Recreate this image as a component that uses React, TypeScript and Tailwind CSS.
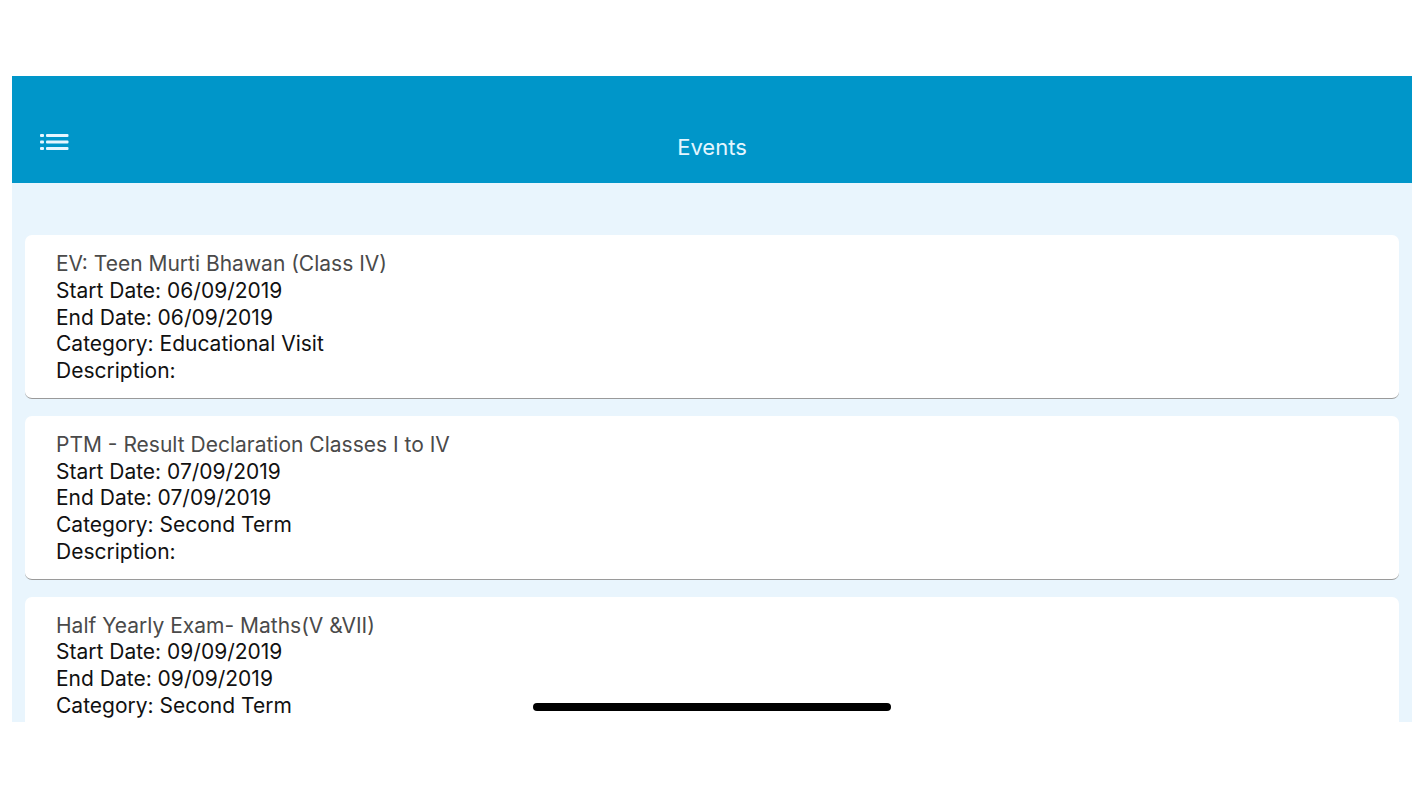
const events = [
  {
    title: "EV: Teen Murti Bhawan (Class IV)",
    start: "06/09/2019",
    end: "06/09/2019",
    category: "Educational Visit",
  },
  {
    title: "PTM - Result Declaration Classes I to IV",
    start: "07/09/2019",
    end: "07/09/2019",
    category: "Second Term",
  },
  {
    title: "Half Yearly Exam- Maths(V &VII)",
    start: "09/09/2019",
    end: "09/09/2019",
    category: "Second Term",
  },
]

function ListIcon() {
  return (
    <svg width="30" height="18" viewBox="0 0 30 18" fill="#e6f6ff">
      <rect x="0" y="1" width="4" height="3" rx="1" />
      <rect x="0" y="7.5" width="4" height="3" rx="1" />
      <rect x="0" y="14" width="4" height="3" rx="1" />
      <rect x="6" y="1" width="22.5" height="3" rx="1" />
      <rect x="6" y="7.5" width="22.5" height="3" rx="1" />
      <rect x="6" y="14" width="22.5" height="3" rx="1" />
    </svg>
  )
}

export default function App() {
  return (
    <div className="w-[1422px] h-[800px] bg-white font-['Inter','Roboto',sans-serif] overflow-hidden">
      <div className="pt-[76px] pl-[12px]">
        <div className="relative w-[1400px] h-[646px] overflow-hidden bg-[#e9f5fd]">
          <div className="h-[107px] bg-[#0096c9] flex items-end pb-[21px] relative">
            <div className="absolute left-[28px] top-[57px]">
              <ListIcon />
            </div>
            <div className="w-full text-center text-[22px] text-[#e4f6ff] leading-[30px]">Events</div>
          </div>
          <div className="pt-[52px] px-[13px] flex flex-col gap-[17px]">
            {events.map((ev, i) => (
              <div
                key={ev.title}
                className="bg-white rounded-[7px] border-b border-[#9a9a9a] pl-[31px] pt-[16px] pb-[13px] text-[21px] leading-[26.75px]"
              >
                <div className="text-[#4a4a4a]">{ev.title}</div>
                <div className="text-[#111]">Start Date: {ev.start}</div>
                <div className="text-[#111]">End Date: {ev.end}</div>
                <div className="text-[#111]">Category: {ev.category}</div>
                {i < 2 && <div className="text-[#111]">Description:</div>}
              </div>
            ))}
          </div>
          <div className="absolute left-[521px] top-[627px] w-[358px] h-[8px] rounded-full bg-black" />
        </div>
      </div>
    </div>
  )
}
